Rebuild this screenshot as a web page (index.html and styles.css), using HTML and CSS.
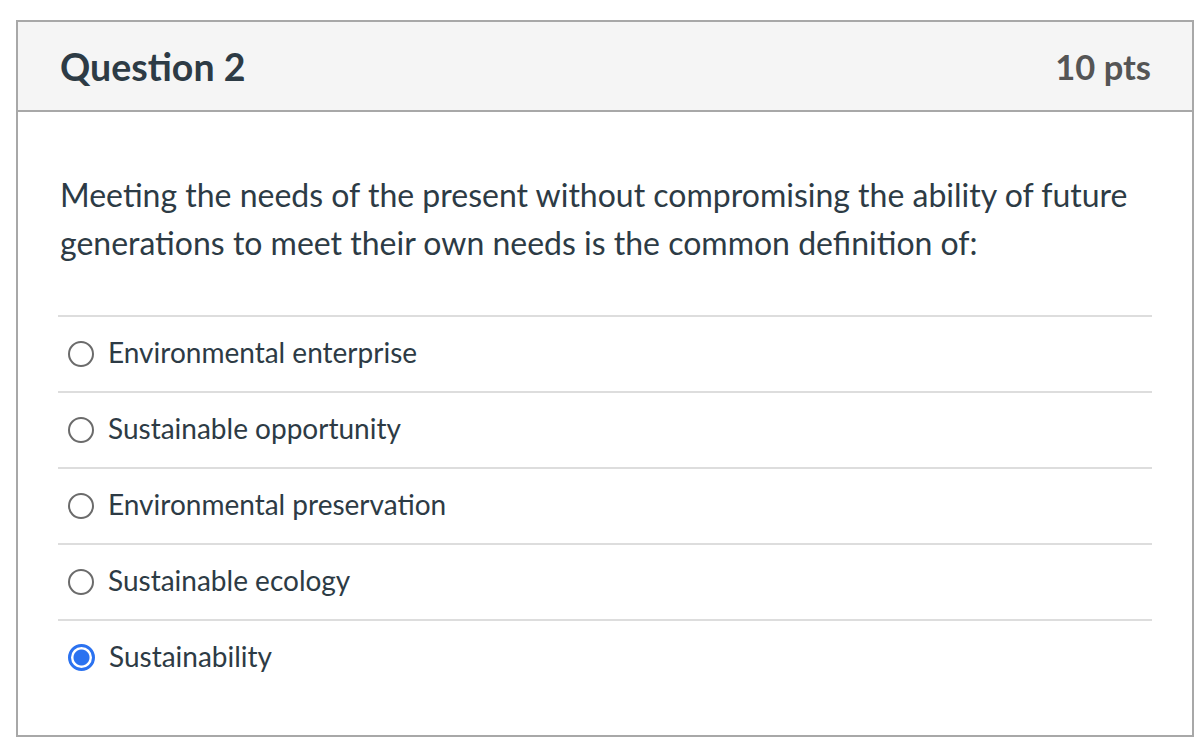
FILE: index.html
```html
<!DOCTYPE html>
<html lang="en">
<head>
<meta charset="utf-8">
<title>Question 2</title>
<link rel="stylesheet" href="styles.css">
</head>
<body>
<div class="page">
  <section class="question">
    <header class="question-header">
      <h2 class="question-title">Question 2</h2>
      <span class="question-points">10 pts</span>
    </header>
    <div class="question-body">
      <p class="question-text">Meeting the needs of the present without compromising the ability of future generations to meet their own needs is the common definition of:</p>
      <ul class="answers">
        <li class="answer"><span class="radio"></span><span class="answer-label">Environmental enterprise</span></li>
        <li class="answer"><span class="radio"></span><span class="answer-label">Sustainable opportunity</span></li>
        <li class="answer"><span class="radio"></span><span class="answer-label">Environmental preservation</span></li>
        <li class="answer"><span class="radio"></span><span class="answer-label">Sustainable ecology</span></li>
        <li class="answer"><span class="radio radio-checked"></span><span class="answer-label">Sustainability</span></li>
      </ul>
    </div>
  </section>
</div>
</body>
</html>
```
FILE: styles.css
```css
html, body {
  margin: 0;
  padding: 0;
  background: #ffffff;
}

body {
  font-family: Lato, "Open Sans", "Liberation Sans", sans-serif;
  color: #2d3b45;
}

.page {
  padding: 20px 8px 0 16px;
}

.question {
  width: 1174px;
  height: 713px;
  border: 2px solid #a8a8a8;
  display: flex;
  flex-direction: column;
}

.question-header {
  height: 88px;
  background: #f5f5f5;
  border-bottom: 2px solid #a8a8a8;
  display: flex;
  align-items: center;
  justify-content: space-between;
  padding: 0 41px 0 42px;
}

.question-title {
  margin: 0;
  font-size: 37.5px;
  font-weight: 700;
  color: #2d3b45;
}

.question-points {
  font-size: 34.5px;
  font-weight: 700;
  color: #555555;
}

.question-body {
  padding: 59px 40px 0 40px;
}

.question-text {
  margin: 0 0 48px 2px;
  font-size: 32px;
  line-height: 48px;
}

.answers {
  list-style: none;
  margin: 0;
  padding: 0;
}

.answer {
  height: 74px;
  border-top: 2px solid #dddddd;
  display: flex;
  align-items: center;
  gap: 14px;
  padding-left: 10px;
}

.radio {
  width: 22px;
  height: 22px;
  border: 2px solid #6b6b6b;
  border-radius: 50%;
  box-sizing: content-box;
  flex: none;
  margin-bottom: 1px;
}

.radio-checked {
  border: 3px solid #2b72f0;
  width: 21px;
  height: 21px;
  background: radial-gradient(circle, #2b72f0 0 7.5px, #ffffff 8.5px);
}

.answer-label {
  font-size: 28px;
  padding-bottom: 4px;
}
```
